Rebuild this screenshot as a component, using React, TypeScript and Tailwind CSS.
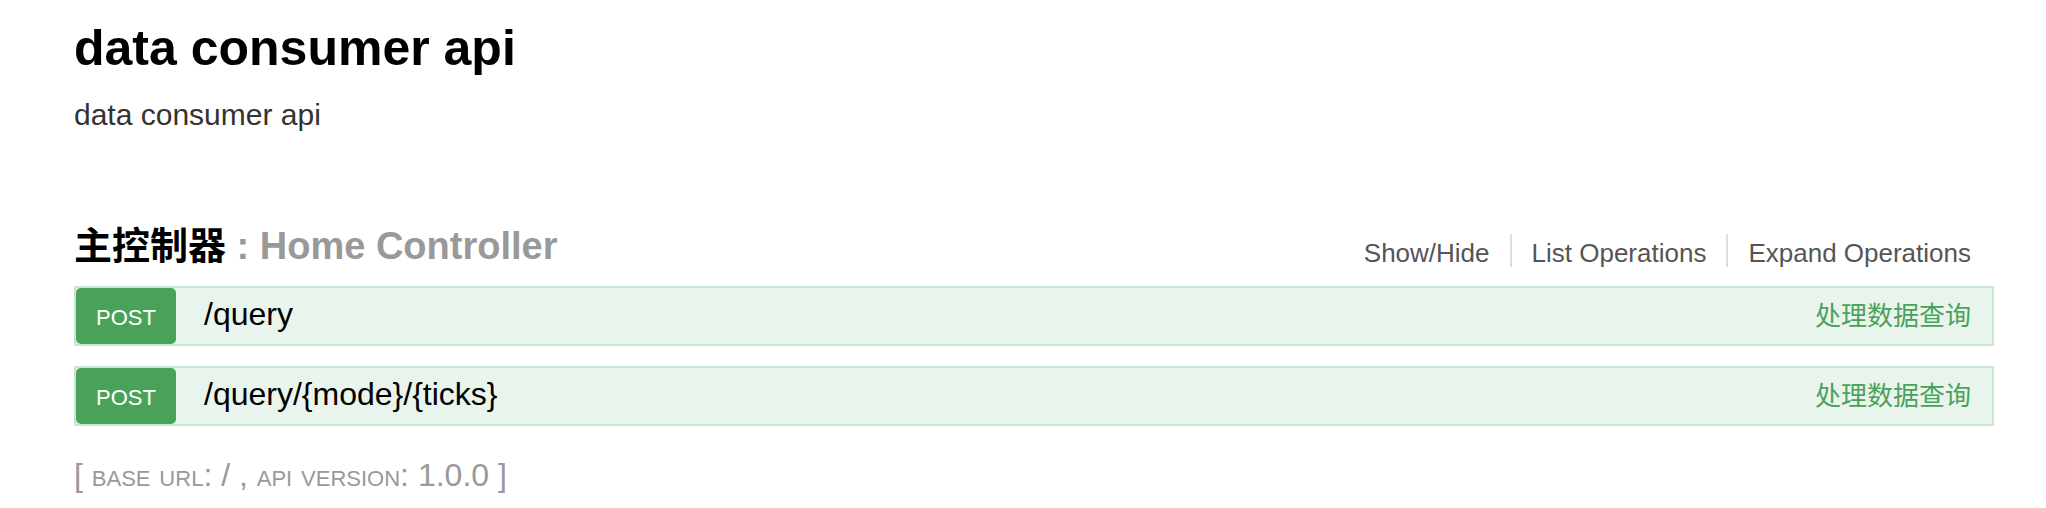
import React from "react";

const FONT = { fontFamily: '"Liberation Sans", Arial, "Noto Sans CJK SC", sans-serif' };

function OpRow({ path, summary }: { path: string; summary: string }) {
  return (
    <div className="flex h-[60px] items-stretch border-2 border-[#c6e7d1] bg-[#e8f4ec]">
      <div className="flex w-[100px] items-center justify-center rounded-[5px] bg-[#4aa25a] pt-[3px] text-[22px] text-white">
        POST
      </div>
      <div className="ml-[28px] flex-1 text-[32px] leading-[52px] text-black">{path}</div>
      <div className="flex items-center pr-[21px] text-[26px] text-[#4aa25a]">{summary}</div>
    </div>
  );
}

export default function App() {
  return (
    <div className="min-h-[508px] bg-white pl-[74px]" style={FONT}>
      <div className="w-[1920px]">
        <h1 className="pt-[18px] text-[50px] font-bold leading-[60px] text-black">data consumer api</h1>
        <p className="mt-[19px] text-[30px] leading-[36px] text-[#333]">data consumer api</p>

        <div className="mt-[90px] flex items-start justify-between">
          <h2 className="text-[38px] font-bold leading-[46px] text-[#999]">
            <span className="text-black">主控制器</span> : Home Controller
          </h2>
          <ul className="mt-[11px] flex pr-[23px] text-[26px] text-[#555]">
            <li className="border-r-2 border-[#ddd] pr-[20px] pt-[5px] leading-[28px]">Show/Hide</li>
            <li className="border-r-2 border-[#ddd] px-[20px] pt-[5px] leading-[28px]">List Operations</li>
            <li className="pl-[20px] pt-[5px] leading-[28px]">Expand Operations</li>
          </ul>
        </div>

        <div className="mt-[17px] flex flex-col gap-[20px]">
          <OpRow path="/query" summary="处理数据查询" />
          <OpRow path="/query/{mode}/{ticks}" summary="处理数据查询" />
        </div>

        <p className="mt-[29px] text-[32px] leading-[40px] text-[#999]">
          [ <span className="[font-variant:small-caps]">base url</span>: / ,{" "}
          <span className="[font-variant:small-caps]">api version</span>: 1.0.0 ]
        </p>
      </div>
    </div>
  );
}
